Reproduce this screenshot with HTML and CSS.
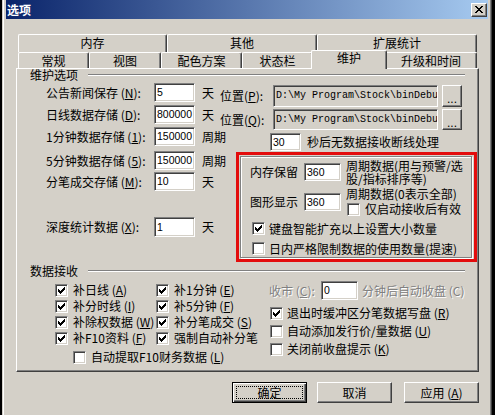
FILE: index.html
```html
<!DOCTYPE html>
<html lang="zh-CN">
<head>
    <meta charset="UTF-8">
    <meta name="viewport" content="width=device-width, initial-scale=1.0">
    <title>选项</title>
    <link rel="stylesheet" href="styles.css">
</head>
<body>
<div class="window">
    <div class="titlebar">
        <span class="title">选项</span>
        <span class="close-btn">
            <svg width="8" height="7" viewBox="0 0 8 7" shape-rendering="crispEdges"><path d="M0 0h2v1H0zM6 0h2v1H6zM1 1h2v1H1zM5 1h2v1H5zM2 2h4v1H2zM3 3h2v1H3zM2 4h4v1H2zM1 5h2v1H1zM5 5h2v1H5zM0 6h2v1H0zM6 6h2v1H6z"/></svg>
        </span>
    </div>

    <div class="dialog">
        <!-- Pestañas en dos filas -->
        <div class="tabrow back">
            <div class="tab w149">内存</div>
            <div class="tab w150">其他</div>
            <div class="tab w160">扩展统计</div>
        </div>
        <div class="tabrow front">
            <div class="tab w71">常规</div>
            <div class="tab w72">视图</div>
            <div class="tab w81">配色方案</div>
            <div class="tab w71">状态栏</div>
            <div class="tab active">维护</div>
            <div class="tab w92">升级和时间</div>
        </div>

        <div class="panel">
            <div class="group-head"><span>维护选项</span><i class="etch"></i></div>

            <div class="rows">
                <div class="row">
                    <div class="cell"><span class="lbl">公告新闻保存 (<u>N</u>):</span><span class="field">5</span><span class="unit">天</span></div>
                    <div class="path-group">
                        <span class="path-lbl">位置(<u>P</u>):</span>
                        <span class="field path">D:\My Program\Stock\binDebu</span>
                        <span class="btn dots">...</span>
                    </div>
                </div>
                <div class="row second">
                    <div class="cell"><span class="lbl">日线数据存储 (<u>D</u>):</span><span class="field">800000</span><span class="unit">天</span></div>
                    <div class="path-group low">
                        <span class="path-lbl">位置(<u>Q</u>):</span>
                        <span class="field path">D:\My Program\Stock\binDebu</span>
                        <span class="btn dots">...</span>
                    </div>
                </div>

                <div class="mid">
                    <div class="mid-left">
                        <div class="cell"><span class="lbl">1分钟数据存储 (<u>1</u>):</span><span class="field">150000</span><span class="unit">周期</span></div>
                        <div class="cell r4"><span class="lbl">5分钟数据存储 (<u>5</u>):</span><span class="field">150000</span><span class="unit">周期</span></div>
                        <div class="cell r5"><span class="lbl">分笔成交存储 (<u>M</u>):</span><span class="field">10</span><span class="unit">天</span></div>
                        <div class="cell deep"><span class="lbl">深度统计数据 (<u>X</u>):</span><span class="field tall">1</span><span class="unit">天</span></div>
                    </div>
                    <div class="mid-right">
                        <div class="wait-row"><span class="field w31">30</span><span class="wait-text">秒后无数据接收断线处理</span></div>
                        <div class="mark">
                            <div class="etched-box">
                                <div class="mem-row">
                                    <div class="cell small"><span class="lbl2">内存保留</span><span class="field w37">360</span></div>
                                    <div class="note">周期数据(用与预警/选<br>股/指标排序等)</div>
                                </div>
                                <div class="mem-row second">
                                    <div class="cell small"><span class="lbl2">图形显示</span><span class="field w37">360</span></div>
                                    <div class="note-col">
                                        <div class="note">周期数据(0表示全部)</div>
                                        <label class="check sub"><span class="chk"></span>仅启动接收后有效</label>
                                    </div>
                                </div>
                                <label class="check box-c"><span class="chk"><svg width="7" height="7" viewBox="0 0 7 7" shape-rendering="crispEdges"><path d="M0 2h1v3H0zM1 3h1v3H1zM2 4h1v3H2zM3 3h1v3H3zM4 2h1v3H4zM5 1h1v3H5zM6 0h1v3H6z"/></svg></span>键盘智能扩充以上设置大小数量</label>
                                <label class="check box-d"><span class="chk"></span>日内严格限制数据的使用数量(提速)</label>
                            </div>
                        </div>
                    </div>
                </div>
            </div>

            <div class="group-head second"><span>数据接收</span><i class="etch"></i></div>

            <div class="data">
                <div class="data-left">
                    <div class="check-grid">
                        <label class="check"><span class="chk"><svg width="7" height="7" viewBox="0 0 7 7" shape-rendering="crispEdges"><path d="M0 2h1v3H0zM1 3h1v3H1zM2 4h1v3H2zM3 3h1v3H3zM4 2h1v3H4zM5 1h1v3H5zM6 0h1v3H6z"/></svg></span>补日线 (<u>A</u>)</label>
                        <label class="check"><span class="chk"><svg width="7" height="7" viewBox="0 0 7 7" shape-rendering="crispEdges"><path d="M0 2h1v3H0zM1 3h1v3H1zM2 4h1v3H2zM3 3h1v3H3zM4 2h1v3H4zM5 1h1v3H5zM6 0h1v3H6z"/></svg></span>补1分钟 (<u>E</u>)</label>
                        <label class="check"><span class="chk"><svg width="7" height="7" viewBox="0 0 7 7" shape-rendering="crispEdges"><path d="M0 2h1v3H0zM1 3h1v3H1zM2 4h1v3H2zM3 3h1v3H3zM4 2h1v3H4zM5 1h1v3H5zM6 0h1v3H6z"/></svg></span>补分时线 (<u>I</u>)</label>
                        <label class="check"><span class="chk"><svg width="7" height="7" viewBox="0 0 7 7" shape-rendering="crispEdges"><path d="M0 2h1v3H0zM1 3h1v3H1zM2 4h1v3H2zM3 3h1v3H3zM4 2h1v3H4zM5 1h1v3H5zM6 0h1v3H6z"/></svg></span>补5分钟 (<u>F</u>)</label>
                        <label class="check"><span class="chk"><svg width="7" height="7" viewBox="0 0 7 7" shape-rendering="crispEdges"><path d="M0 2h1v3H0zM1 3h1v3H1zM2 4h1v3H2zM3 3h1v3H3zM4 2h1v3H4zM5 1h1v3H5zM6 0h1v3H6z"/></svg></span>补除权数据 (<u>W</u>)</label>
                        <label class="check"><span class="chk"><svg width="7" height="7" viewBox="0 0 7 7" shape-rendering="crispEdges"><path d="M0 2h1v3H0zM1 3h1v3H1zM2 4h1v3H2zM3 3h1v3H3zM4 2h1v3H4zM5 1h1v3H5zM6 0h1v3H6z"/></svg></span>补分笔成交 (<u>S</u>)</label>
                        <label class="check"><span class="chk"><svg width="7" height="7" viewBox="0 0 7 7" shape-rendering="crispEdges"><path d="M0 2h1v3H0zM1 3h1v3H1zM2 4h1v3H2zM3 3h1v3H3zM4 2h1v3H4zM5 1h1v3H5zM6 0h1v3H6z"/></svg></span>补F10资料 (<u>F</u>)</label>
                        <label class="check"><span class="chk"><svg width="7" height="7" viewBox="0 0 7 7" shape-rendering="crispEdges"><path d="M0 2h1v3H0zM1 3h1v3H1zM2 4h1v3H2zM3 3h1v3H3zM4 2h1v3H4zM5 1h1v3H5zM6 0h1v3H6z"/></svg></span>强制自动补分笔</label>
                    </div>
                    <label class="check indent"><span class="chk"></span>自动提取F10财务数据 (<u>L</u>)</label>
                </div>
                <div class="data-right">
                    <div class="close-row">
                        <span class="disabled close-lbl">收市 (<u>C</u>):</span>
                        <span class="field w37">0</span>
                        <span class="disabled close-text">分钟后自动收盘 (C)</span>
                    </div>
                    <label class="check r-first"><span class="chk"><svg width="7" height="7" viewBox="0 0 7 7" shape-rendering="crispEdges"><path d="M0 2h1v3H0zM1 3h1v3H1zM2 4h1v3H2zM3 3h1v3H3zM4 2h1v3H4zM5 1h1v3H5zM6 0h1v3H6z"/></svg></span>退出时缓冲区分笔数据写盘 (<u>R</u>)</label>
                    <label class="check r-next"><span class="chk"></span>自动添加发行价/量数据 (<u>U</u>)</label>
                    <label class="check r-next"><span class="chk"></span>关闭前收盘提示 (<u>K</u>)</label>
                </div>
            </div>
        </div>

        <div class="buttons">
            <span class="btn push default"><span class="focus">确定</span></span>
            <span class="btn push">取消</span>
            <span class="btn push last">应用 (<u>A</u>)</span>
        </div>
    </div>
</div>
</body>
</html>
```

FILE: styles.css
```css
* {
    box-sizing: border-box;
}

body {
    margin: 0;
    height: 415px;
    overflow: hidden;
    background: #000;
    font-family: "SimSun", "Noto Sans CJK SC", sans-serif;
    font-size: 12px;
    line-height: 12px;
    color: #000;
}

u {
    text-decoration: underline;
}

/* Ventana */
.window {
    width: 490px;
    height: 415px;
    margin-left: 2px;
    padding: 0 3px;
    background: #d4d0c8;
    border-left: 1px solid #d4d0c8;
    border-right: 1px solid #404040;
    box-shadow: inset 1px 0 #fff, inset -1px 0 #808080;
}

.titlebar {
    height: 19px;
    display: flex;
    align-items: center;
    justify-content: space-between;
    padding: 0 1px 0 1px;
    background: linear-gradient(to right, #0a246a, #a6caf0);
}

.title {
    color: #fff;
    font-weight: bold;
}

.close-btn {
    width: 16px;
    height: 14px;
    display: flex;
    align-items: center;
    justify-content: center;
    background: #d4d0c8;
    border: 1px solid;
    border-color: #fff #404040 #404040 #fff;
    box-shadow: inset -1px -1px #808080;
}

.dialog {
    padding: 15px 9px 0 10px;
}

/* Pestañas */
.tabrow {
    display: flex;
    padding-left: 2px;
}

.tabrow.back {
    height: 18px;
}

.tabrow.front {
    height: 16px;
}

.tab {
    height: 100%;
    flex: none;
    text-align: center;
    line-height: 15px;
    background: #d4d0c8;
    border-top: 1px solid #fff;
    border-left: 1px solid #fff;
    border-right: 1px solid #404040;
    border-radius: 2px 2px 0 0;
    box-shadow: inset -1px 0 #808080;
}

.w71 { width: 71px; }
.w72 { width: 72px; }
.w81 { width: 81px; }
.w92 { width: 92px; }
.w149 { width: 149px; }
.w150 { width: 150px; }
.w160 { width: 160px; }

.tab.active {
    width: 76px;
    height: 19px;
    margin: -2px -2px 0;
    line-height: 14px;
    position: relative;
    z-index: 1;
}

/* Panel */
.panel {
    height: 304px;
    border-top: 1px solid #fff;
    border-left: 1px solid #fff;
    border-right: 1px solid #404040;
    border-bottom: 1px solid #404040;
    box-shadow: inset -1px -1px #808080;
}

.group-head {
    display: flex;
    align-items: center;
    height: 12px;
    padding-left: 13px;
}

.group-head.second {
    margin-top: 3px;
}

.etch {
    flex: 1;
    height: 2px;
    margin: 0 13px 0 10px;
    border-top: 1px solid #808080;
    border-bottom: 1px solid #fff;
}

.rows {
    padding-left: 29px;
}

.row {
    display: flex;
    align-items: flex-start;
    margin-top: 2px;
}

.row.second {
    margin-top: -2px;
}

.cell {
    display: flex;
    align-items: center;
    height: 19px;
}

.lbl {
    width: 108px;
    white-space: nowrap;
}

.field {
    width: 41px;
    height: 19px;
    flex: none;
    padding-left: 2px;
    background: #fff;
    font-family: "Liberation Sans", sans-serif;
    font-size: 10.5px;
    line-height: 17px;
    white-space: nowrap;
    overflow: hidden;
    border: 1px solid;
    border-color: #808080 #fff #fff #808080;
    box-shadow: inset 1px 1px #404040, inset -1px -1px #d4d0c8;
}

.field.tall {
    height: 20px;
    line-height: 18px;
}

.field.w31 {
    width: 31px;
    height: 18px;
    line-height: 16px;
}

.field.w37 {
    width: 37px;
    height: 18px;
    line-height: 16px;
}

.unit {
    margin-left: 7px;
}

.path-group {
    display: flex;
    align-items: center;
    height: 22px;
    margin: 2px 0 0 6px;
}

.path-group.low {
    height: 21px;
    margin-top: 4px;
}

.path-lbl {
    width: 53px;
    white-space: nowrap;
}

.field.path {
    width: 165px;
    height: 100%;
    padding-left: 2px;
    background: #d4d0c8;
    font-family: "Liberation Mono", monospace;
    font-size: 10px;
    line-height: 19px;
}

.btn {
    display: flex;
    align-items: center;
    justify-content: center;
    background: #d4d0c8;
    border: 1px solid;
    border-color: #fff #404040 #404040 #fff;
    box-shadow: inset -1px -1px #808080;
}

.btn.dots {
    width: 20px;
    height: 100%;
    margin-left: 4px;
    padding-top: 6px;
    font-family: "Liberation Sans", sans-serif;
}

/* Zona central */
.mid {
    display: flex;
    margin-top: -3px;
}

.mid-left {
    width: 190px;
}

.cell.r4 {
    margin-top: 5px;
}

.cell.r5 {
    margin-top: 2px;
}

.cell.deep {
    height: 20px;
    margin-top: 26px;
}

.mid-right {
    width: 241px;
}

.wait-row {
    display: flex;
    align-items: center;
    margin-top: 6px;
    padding-left: 34px;
}

.wait-text {
    margin-left: 6px;
}

.mark {
    height: 110px;
    margin-top: 1px;
    padding: 1px 2px 1px 1px;
    border: 3px solid #e30c0c;
}

.etched-box {
    height: 102px;
    padding: 0 0 0 9px;
    border: 1px solid #808080;
    box-shadow: inset 1px 1px #fff, 1px 1px #fff;
}

.mem-row {
    display: flex;
    align-items: flex-start;
    margin-top: 2px;
}

.mem-row .cell {
    height: 18px;
    margin-top: 4px;
}

.mem-row.second .cell {
    margin-top: 6px;
}

.lbl2 {
    width: 54px;
}

.note {
    margin-left: 5px;
    line-height: 13px;
    white-space: nowrap;
}

/* Casillas */
.check {
    display: flex;
    align-items: center;
    height: 16px;
    white-space: nowrap;
}

.chk {
    width: 13px;
    height: 13px;
    flex: none;
    display: flex;
    align-items: center;
    justify-content: center;
    margin-right: 5px;
    background: #fff;
    border: 1px solid;
    border-color: #808080 #fff #fff #808080;
    box-shadow: inset 1px 1px #404040, inset -1px -1px #d4d0c8;
}

.check.sub {
    height: 14px;
    margin: 2px 0 0 6px;
}

.check.box-c {
    height: 13px;
    margin: 6px 0 0 2px;
}

.check.box-d {
    height: 13px;
    margin: 7px 0 0 2px;
}

.box-c .chk,
.box-d .chk {
    margin-right: 4px;
}

.data {
    display: flex;
}

.data-left {
    width: 251px;
    padding: 5px 0 0 38px;
}

.check-grid {
    display: grid;
    grid-template-columns: 101px auto;
    grid-auto-rows: 16px;
}

.check.indent {
    height: 14px;
    margin: 4px 0 0 18px;
}

.data-right {
    padding: 4px 0 0 1px;
}

.close-row {
    display: flex;
    align-items: center;
    height: 19px;
}

.close-row .field {
    height: 19px;
    line-height: 17px;
}

.disabled {
    color: #808080;
    text-shadow: 1px 1px #fff;
}

.close-lbl {
    width: 52px;
    white-space: nowrap;
}

.close-text {
    margin-left: 4px;
    white-space: nowrap;
}

.check.r-first {
    margin: 5px 0 0 1px;
}

.check.r-next {
    margin: 2px 0 0 1px;
}

.data-right .chk {
    margin-right: 4px;
}

/* Botones */
.buttons {
    display: flex;
    justify-content: flex-end;
    gap: 10px;
    margin-top: 10px;
}

.btn.push {
    width: 75px;
    height: 21px;
}

.btn.push.last {
    margin-left: 2px;
}

.btn.default {
    border: 1px solid #000;
    box-shadow: inset 1px 1px #fff, inset -1px -1px #404040, inset -2px -2px #808080;
    padding: 3px;
}

.focus {
    width: 100%;
    height: 100%;
    display: flex;
    align-items: center;
    justify-content: center;
    border: 1px dotted #000;
}
```
